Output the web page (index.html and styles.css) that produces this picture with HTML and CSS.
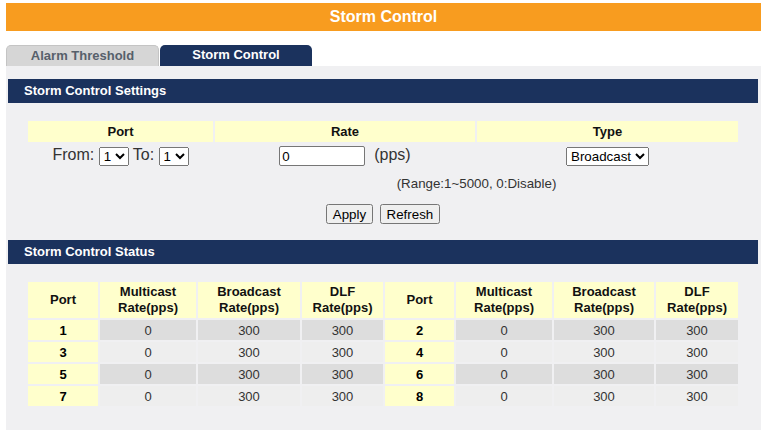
FILE: index.html
```html
<!DOCTYPE html>
<html lang="en">
<head>
    <meta charset="UTF-8">
    <meta name="viewport" content="width=device-width, initial-scale=1.0">
    <title>Storm Control</title>
    <link rel="stylesheet" href="styles.css">
</head>
<body>
    <div class="page">
        <div class="title-bar">Storm Control</div>
        <div class="tabs">
            <div class="tab">Alarm Threshold</div>
            <div class="tab tab-active">Storm Control</div>
        </div>
        <div class="panel">
            <div class="section-head">Storm Control Settings</div>
            <table class="settings">
                <colgroup>
                    <col class="c-port">
                    <col class="c-rate">
                    <col class="c-type">
                </colgroup>
                <tr class="head-row">
                    <th>Port</th>
                    <th>Rate</th>
                    <th>Type</th>
                </tr>
                <tr class="input-row">
                    <td>From: <select><option>1</option><option>2</option><option>3</option><option>4</option><option>5</option><option>6</option><option>7</option><option>8</option></select>
                        To: <select><option>1</option><option>2</option><option>3</option><option>4</option><option>5</option><option>6</option><option>7</option><option>8</option></select></td>
                    <td><input type="text" class="rate-input" value="0"> &nbsp;(pps)</td>
                    <td><select><option>Broadcast</option><option>Multicast</option><option>DLF</option></select></td>
                </tr>
                <tr class="range-row">
                    <td></td>
                    <td colspan="2">(Range:1~5000, 0:Disable)</td>
                </tr>
            </table>
            <div class="buttons">
                <button>Apply</button>
                <button>Refresh</button>
            </div>

            <div class="section-head">Storm Control Status</div>
            <table class="status">
                <colgroup>
                    <col class="s1"><col class="s2"><col class="s3"><col class="s4">
                    <col class="s5"><col class="s6"><col class="s7"><col class="s8">
                </colgroup>
                <tr class="head-row">
                    <th>Port</th>
                    <th>Multicast<br>Rate(pps)</th>
                    <th>Broadcast<br>Rate(pps)</th>
                    <th>DLF<br>Rate(pps)</th>
                    <th>Port</th>
                    <th>Multicast<br>Rate(pps)</th>
                    <th>Broadcast<br>Rate(pps)</th>
                    <th>DLF<br>Rate(pps)</th>
                </tr>
                <tr class="dark">
                    <td class="port">1</td><td>0</td><td>300</td><td>300</td>
                    <td class="port">2</td><td>0</td><td>300</td><td>300</td>
                </tr>
                <tr class="light">
                    <td class="port">3</td><td>0</td><td>300</td><td>300</td>
                    <td class="port">4</td><td>0</td><td>300</td><td>300</td>
                </tr>
                <tr class="dark">
                    <td class="port">5</td><td>0</td><td>300</td><td>300</td>
                    <td class="port">6</td><td>0</td><td>300</td><td>300</td>
                </tr>
                <tr class="light">
                    <td class="port">7</td><td>0</td><td>300</td><td>300</td>
                    <td class="port">8</td><td>0</td><td>300</td><td>300</td>
                </tr>
            </table>
        </div>
    </div>
</body>
</html>
```

FILE: styles.css
```css
body{
    margin: 0;
    background-color: white;
    font-family: "Liberation Sans", Arial, sans-serif;
}
.page{
    width: 755px;
    padding: 3px 0 0 6px;
}
.title-bar{
    height: 28px;
    line-height: 28px;
    background-color: #f89c1f;
    color: white;
    font-size: 16px;
    font-weight: bold;
    text-align: center;
}
.tabs{
    display: flex;
    gap: 1px;
    margin-top: 14px;
    height: 21px;
}
.tab{
    width: 151px;
    height: 20px;
    line-height: 20px;
    background-color: #d6d6d6;
    border: 1px solid #c4c4c4;
    border-bottom: none;
    border-radius: 5px 5px 0 0;
    color: #56606b;
    font-size: 13px;
    font-weight: bold;
    text-align: center;
}
.tab-active{
    width: 152px;
    height: 21px;
    border: none;
    background-color: #1b325d;
    color: white;
}
.panel{
    background-color: #f0f0f2;
    padding: 13px 3px 22px 2px;
}
.section-head{
    height: 24px;
    line-height: 24px;
    background-color: #1b325d;
    color: white;
    font-size: 13px;
    font-weight: bold;
    padding-left: 16px;
}
table{
    border-collapse: separate;
    border-spacing: 2px;
    table-layout: fixed;
    width: 714px;
    margin-left: 18px;
}
th{
    background-color: #ffffcc;
    color: #111;
    font-size: 13px;
    font-weight: bold;
    padding: 0;
}
td{
    padding: 0;
    text-align: center;
}
select, input, button{
    font-family: "Liberation Sans", Arial, sans-serif;
    font-size: 13.33px;
}
.settings{
    margin-top: 16px;
}
.c-port{ width: 185px; }
.c-rate{ width: 260px; }
.c-type{ width: 261px; }
.settings .head-row th{
    height: 21px;
}
.input-row td{
    height: 24px;
    font-size: 16px;
    color: #333;
}
.rate-input{
    width: 80px;
    height: 16px;
    padding: 1px 2px;
    border: 1px solid #767676;
    border-radius: 2px;
    vertical-align: middle;
}
.input-row select{
    vertical-align: middle;
}
.range-row td{
    height: 26px;
    font-size: 13.33px;
    color: #333;
}
.buttons{
    text-align: center;
    margin-top: 6px;
    margin-bottom: 16px;
    height: 20px;
}
.buttons button{
    height: 20px;
    padding: 0 5px;
    margin: 0 1px;
}
.status{
    margin-top: 16px;
}
.s1{ width: 70px; }
.s2{ width: 96px; }
.s3{ width: 102px; }
.s4{ width: 81px; }
.s5{ width: 69px; }
.s6{ width: 96px; }
.s7{ width: 100px; }
.s8{ width: 82px; }
.status .head-row th{
    height: 36px;
    line-height: 16px;
}
.status td{
    height: 20px;
    font-size: 13px;
    color: #333;
}
.status .dark td{
    background-color: #dddddd;
}
.status .light td{
    background-color: #eeeeee;
}
.status td.port{
    background-color: #ffffcc;
    color: #000;
    font-weight: bold;
}
```
